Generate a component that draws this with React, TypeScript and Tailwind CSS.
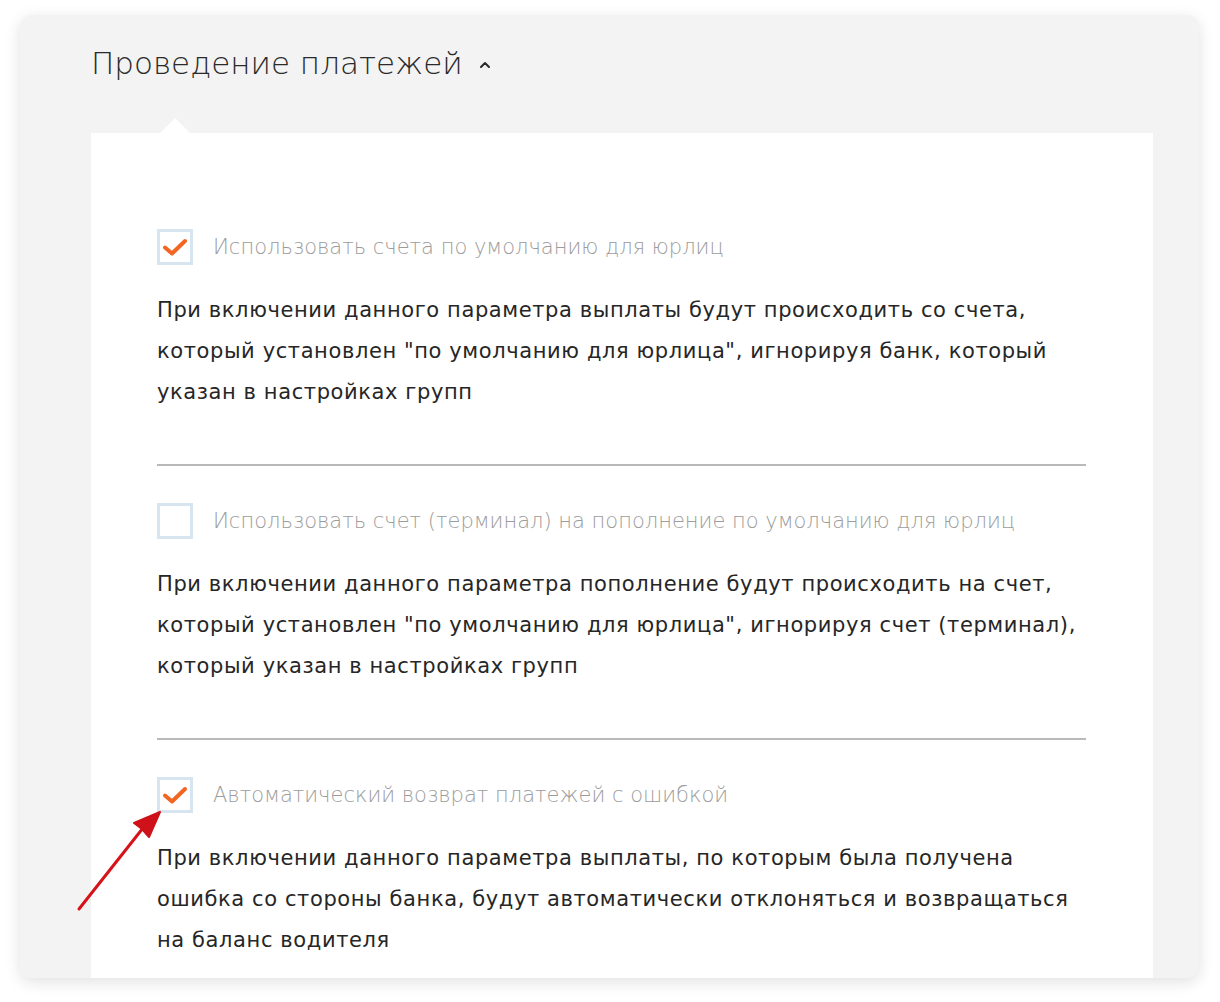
import React from "react"

type Option = {
  label: string
  checked: boolean
  text: string
}

const options: Option[] = [
  {
    label: "Использовать счета по умолчанию для юрлиц",
    checked: true,
    text: 'При включении данного параметра выплаты будут происходить со счета, который установлен "по умолчанию для юрлица", игнорируя банк, который указан в настройках групп',
  },
  {
    label: "Использовать счет (терминал) на пополнение по умолчанию для юрлиц",
    checked: false,
    text: 'При включении данного параметра пополнение будут происходить на счет, который установлен "по умолчанию для юрлица", игнорируя счет (терминал), который указан в настройках групп',
  },
  {
    label: "Автоматический возврат платежей с ошибкой",
    checked: true,
    text: "При включении данного параметра выплаты, по которым была получена ошибка со стороны банка, будут автоматически отклоняться и возвращаться на баланс водителя",
  },
]

function Checkbox({ checked }: { checked: boolean }) {
  return (
    <div className="w-[36px] h-[36px] shrink-0 border-[3px] border-[#d7e5f0] bg-white flex items-center justify-center">
      {checked && (
        <svg width="26" height="22" viewBox="0 0 26 22" fill="none">
          <path
            d="M3 11.5 L10 17.5 L23 5"
            stroke="#f26522"
            strokeWidth="4"
            strokeLinecap="round"
            strokeLinejoin="round"
          />
        </svg>
      )}
    </div>
  )
}

export default function App() {
  return (
    <div
      className="min-h-screen bg-white pt-[15px] pl-[20px] pr-[21px]"
      style={{ fontFamily: '"DejaVu Sans", sans-serif' }}
    >
      <div className="relative h-[963px] rounded-[12px] bg-[#f3f3f3] shadow-[0_4px_16px_rgba(0,0,0,0.12)] pl-[71px] pr-[46px] overflow-hidden">
        {/* header */}
        <div className="h-[103px] pt-[26px] flex items-start">
          <h2 className="text-[31px] leading-[44px] font-light text-[#2a2a2a]">
            Проведение платежей
          </h2>
          <svg className="ml-[16px] mt-[20px]" width="12" height="8" viewBox="0 0 12 8" fill="none">
            <path d="M2 6 L6 2 L10 6" stroke="#2a2a2a" strokeWidth="2" strokeLinecap="round" strokeLinejoin="round" />
          </svg>
        </div>

        {/* notch */}
        <div className="relative">
          <div className="absolute left-[69px] top-0 w-0 h-0 border-l-[15px] border-r-[15px] border-b-[15px] border-l-transparent border-r-transparent border-b-white" />
        </div>

        {/* panel */}
        <div className="mt-[15px] bg-white h-[845px] pt-[96px] pl-[66px] pr-[67px]">
          {options.map((o, i) => (
            <div key={i}>
              {i > 0 && <div className="h-[2px] bg-[#b9b9b9] mb-[37px] mt-[51px]" />}
              <div className="flex items-center gap-[20px]">
                <Checkbox checked={o.checked} />
                <span className="text-[21px] leading-[30px] font-light text-[#9c9c9c]">{o.label}</span>
              </div>
              <p className="mt-[25px] text-[21px] leading-[41px] tracking-[0.6px] text-[#262626]">
                {o.text}
              </p>
            </div>
          ))}
        </div>

        {/* red arrow annotation */}
        <svg className="absolute left-0 top-0 pointer-events-none" width="300" height="963" viewBox="0 0 300 963">
          <path d="M59 894 L123 813" stroke="#d8121b" strokeWidth="3" strokeLinecap="round" />
          <path d="M140 797 L114 808 L122 814 L129 822 Z" fill="#cf1119" stroke="#cf1119" strokeWidth="2" strokeLinejoin="round" />
        </svg>
      </div>
    </div>
  )
}
